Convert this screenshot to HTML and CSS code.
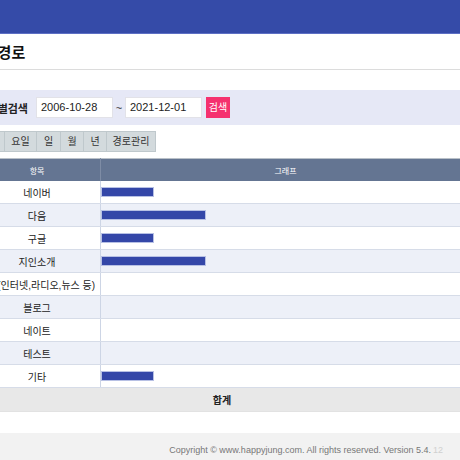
FILE: index.html
```html
<!DOCTYPE html>
<html lang="ko">
<head>
<meta charset="utf-8">
<link rel="stylesheet" href="styles.css">
</head>
<body>
<div class="wrap">
  <div class="topbar"></div>
  <div class="titlebar"><h1 class="title">유입경로</h1></div>
  <div class="search">
    <span class="search-label">기간별검색</span>
    <span class="date-input">2006-10-28</span>
    <span class="tilde">~</span>
    <span class="date-input">2021-12-01</span>
    <span class="search-btn">검색</span>
  </div>
  <div class="tabs">
    <span class="tab tab-first">시간</span>
    <span class="tab tab-w32">요일</span>
    <span class="tab tab-w24">일</span>
    <span class="tab tab-w23">월</span>
    <span class="tab tab-w23">년</span>
    <span class="tab tab-w49">경로관리</span>
  </div>
  <table class="stats">
    <thead>
      <tr><th class="col-name">항목</th><th>그래프</th></tr>
    </thead>
    <tbody>
      <tr><td class="col-name">네이버</td><td><div class="bar" style="width:14.2857%"></div></td></tr>
      <tr class="alt"><td class="col-name">다음</td><td><div class="bar" style="width:28.5714%"></div></td></tr>
      <tr><td class="col-name">구글</td><td><div class="bar" style="width:14.2857%"></div></td></tr>
      <tr class="alt"><td class="col-name">지인소개</td><td><div class="bar" style="width:28.5714%"></div></td></tr>
      <tr><td class="col-name">광고(인터넷,라디오,뉴스 등)</td><td></td></tr>
      <tr class="alt"><td class="col-name">블로그</td><td></td></tr>
      <tr><td class="col-name">네이트</td><td></td></tr>
      <tr class="alt"><td class="col-name">테스트</td><td></td></tr>
      <tr><td class="col-name">기타</td><td><div class="bar" style="width:14.2857%"></div></td></tr>
      <tr class="total"><td colspan="2">합계</td></tr>
    </tbody>
  </table>
  <div class="footer">Copyright © www.happyjung.com. All rights reserved. Version 5.4.<span class="build">12</span></div>
</div>
</body>
</html>
```

FILE: styles.css
```css
html, body {
  margin: 0;
  padding: 0;
  width: 460px;
  height: 460px;
  overflow: hidden;
  background: #ffffff;
}
body {
  font-family: "Liberation Sans", "Noto Sans CJK KR", sans-serif;
  color: #222;
}
.wrap {
  margin-left: -26px;
  width: 496px;
}
.topbar {
  height: 33px;
  background: #354ba8;
  border-bottom: 1px solid #5d6fc4;
}
.titlebar {
  height: 35px;
  border-bottom: 1px solid #dcdcdc;
  display: flex;
  align-items: center;
}
.title {
  margin: 0 0 0 -4px;
  font-size: 15px;
  font-weight: bold;
  color: #111;
  letter-spacing: 0;
}
.search {
  margin-top: 20px;
  height: 35px;
  background: #e6e8f6;
  display: flex;
  align-items: center;
}
.search-label {
  width: 54px;
  font-size: 11px;
  font-weight: bold;
  color: #222;
  white-space: nowrap;
  margin-right: 8px;
  text-align: right;
}
.date-input {
  box-sizing: border-box;
  width: 77px;
  height: 21px;
  background: #fff;
  border: 1px solid #e2e2e8;
  font-size: 11px;
  line-height: 19px;
  padding-left: 4px;
  color: #222;
}
.tilde {
  width: 12px;
  text-align: center;
  font-size: 11px;
  color: #333;
}
.search-btn {
  margin-left: 4px;
  width: 24px;
  height: 21px;
  background: #f5316f;
  color: #fff;
  font-size: 10px;
  line-height: 21px;
  text-align: center;
}
.tabs {
  margin-top: 6px;
  display: flex;
  height: 21px;
}
.tab {
  box-sizing: border-box;
  height: 21px;
  background: #d3dadd;
  border: 1px solid #bfc8cc;
  border-left: none;
  font-size: 10px;
  line-height: 19px;
  color: #333;
  text-align: center;
}
.tab-first { width: 31px; }
.tab-w32 { width: 32px; }
.tab-w24 { width: 24px; }
.tab-w23 { width: 23px; }
.tab-w49 { width: 49px; }
.stats {
  margin-top: 6px;
  width: 496px;
  border-collapse: collapse;
  table-layout: fixed;
  border-top: 1px solid #b9c0c8;
}
.stats th {
  height: 22px;
  background: #647592;
  color: #fff;
  font-size: 8px;
  font-weight: normal;
  padding: 0;
  text-align: center;
}
.stats th.col-name {
  border-right: 1px solid #7e8ca5;
}
.col-name {
  width: 126px;
}
.stats td {
  height: 22px;
  padding: 0;
  border-bottom: 1px solid #d6dce8;
  font-size: 10px;
  text-align: center;
  color: #222;
  white-space: nowrap;
}
.stats td.col-name {
  box-sizing: border-box;
  border-right: 1px solid #cdd5e5;
}
.stats tr.alt td {
  background: #edf0f8;
}
.bar {
  height: 10px;
  background: #3447a8;
  border: 1px solid #b7c0e4;
  box-sizing: border-box;
}
.stats tr.total td {
  background: #e8e8e8;
  font-weight: bold;
  font-size: 10px;
  height: 23px;
  border-bottom: 1px solid #e2e2e2;
}
.footer {
  margin-top: 21px;
  height: 30px;
  background: #f2f2f2;
  font-size: 9px;
  line-height: 34px;
  color: #777;
  text-align: right;
  padding-right: 27px;
}
.build {
  color: #d0d0d0;
  margin-left: 2px;
}
```
